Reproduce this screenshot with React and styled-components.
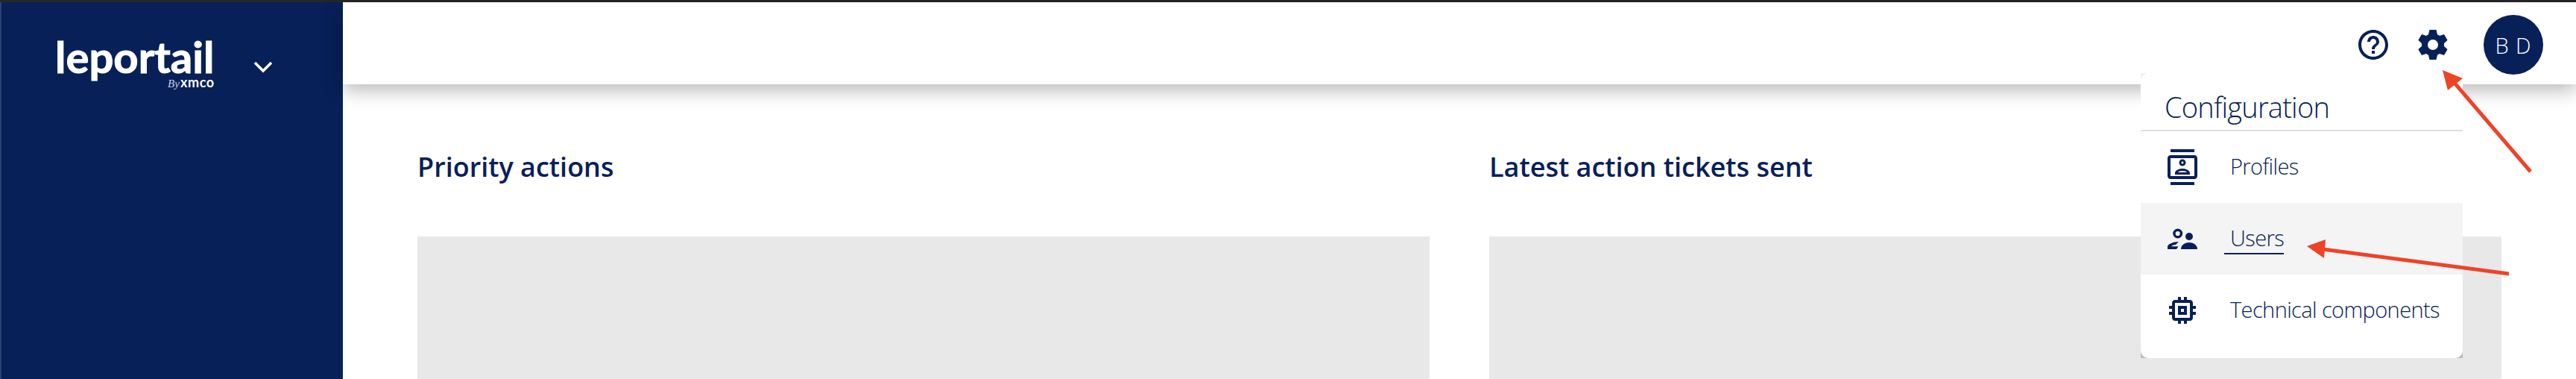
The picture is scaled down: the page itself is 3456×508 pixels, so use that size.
import React from "react";
import styled, { createGlobalStyle } from "styled-components";

const NAVY = "#082058";

const GlobalStyle = createGlobalStyle`
  html, body {
    margin: 0;
    padding: 0;
    background: #fff;
  }
  body {
    font-family: "Open Sans", "Liberation Sans", sans-serif;
    color: ${NAVY};
  }
`;

const Page = styled.div`
  position: relative;
  width: 3456px;
  height: 508px;
  overflow: hidden;
  display: flex;
  flex-direction: column;
  background: #fff;
`;

const TopEdge = styled.div`
  flex: none;
  height: 3px;
  background: #26262a;
`;

const Body = styled.div`
  flex: 1;
  min-height: 0;
  display: flex;
`;

const Sidebar = styled.aside`
  flex: none;
  box-sizing: border-box;
  width: 460px;
  padding: 34px 0 0 70px;
  background: ${NAVY};
  border-left: 2px solid #2d4172;
  display: flex;
  align-items: flex-start;
  gap: 50px;
`;

const Logo = styled.svg`
  flex: none;
  width: 218px;
  height: 90px;
`;

const LogoName = styled.text`
  font-family: "Lato", sans-serif;
  font-weight: 700;
  font-size: 58px;
  fill: #fff;
  stroke: #fff;
  stroke-width: 1px;
`;

const LogoMaker = styled.text`
  font-family: "Lato", sans-serif;
  font-weight: 700;
  font-size: 18px;
  letter-spacing: 0.6px;
  fill: #fff;
`;

const LogoScript = styled.text`
  font-family: "Liberation Serif", serif;
  font-style: italic;
  font-size: 15px;
  fill: #c8d0e0;
`;

const Chevron = styled.svg`
  flex: none;
  width: 26px;
  height: 16px;
  margin-top: 45px;
`;

const Main = styled.main`
  position: relative;
  flex: 1;
  min-width: 0;
  display: flex;
  flex-direction: column;
`;

const Header = styled.header`
  flex: none;
  box-sizing: border-box;
  height: 110px;
  padding: 4px 44px 0 0;
  display: flex;
  align-items: center;
  justify-content: flex-end;
  gap: 32px;
  background: #fff;
  box-shadow: 0 8px 24px rgba(0, 0, 0, 0.28);
`;

const Icon = styled.svg`
  flex: none;
  width: 48px;
  height: 48px;
  fill: ${NAVY};
`;

const Avatar = styled.div`
  width: 80px;
  height: 80px;
  margin-left: 12px;
  border-radius: 50%;
  background: ${NAVY};
  color: #fff;
  display: flex;
  align-items: center;
  justify-content: center;
  font-size: 29px;
  font-weight: 300;
  letter-spacing: 1px;
`;

const Content = styled.div`
  flex: 1;
  min-height: 0;
  padding: 0 100px;
  display: grid;
  grid-template-columns: 1fr 1fr;
  gap: 80px;
`;

const Column = styled.section`
  display: flex;
  flex-direction: column;
  min-height: 0;
`;

const Title = styled.h2`
  margin: 0;
  padding-top: 88px;
  height: 116px;
  font-size: 36px;
  line-height: 46px;
  font-weight: 600;
  color: ${NAVY};
`;

const Placeholder = styled.div`
  flex: 1;
  background: #e8e8e8;
`;

const Dropdown = styled.div`
  position: absolute;
  top: 95px;
  right: 152px;
  width: 432px;
  height: 382px;
  background: linear-gradient(#f0f0f0 50%, #bdbdbd 50%);
`;

const DropdownInner = styled.div`
  height: 100%;
  background: #fff;
  border-radius: 10px;
  overflow: hidden;
`;

const DropdownTitle = styled.div`
  box-sizing: border-box;
  height: 78px;
  padding: 19px 0 0 32px;
  border-bottom: 2px solid #e0e0e0;
  font-size: 38px;
  line-height: 52px;
  font-weight: 300;
  letter-spacing: -0.8px;
`;

const Row = styled.div`
  height: 96px;
  padding-left: 32px;
  display: flex;
  align-items: center;
  background: ${(p) => (p.$active ? "#f4f4f4" : "transparent")};
`;

const RowLabel = styled.span`
  margin-left: ${(p) => (p.$active ? "32px" : "40px")};
  padding-left: ${(p) => (p.$active ? "8px" : "0")};
  border-bottom: 2px solid ${(p) => (p.$active ? NAVY : "transparent")};
  font-size: 29px;
  line-height: 40px;
  font-weight: 300;
  letter-spacing: -0.6px;
  white-space: nowrap;
`;

const Arrows = styled.svg`
  position: absolute;
  top: 0;
  left: 0;
  width: 3456px;
  height: 508px;
  pointer-events: none;
`;

// six blunt teeth around the centre, first one pointing up
const gearPoints = () => {
  const base = [
    [-5.5, -13.6],
    [-4.2, -19.6],
    [4.2, -19.6],
    [5.5, -13.6],
  ];
  const points = [];
  for (let i = 0; i < 6; i++) {
    const a = (i * Math.PI) / 3;
    base.forEach(([x, y]) => {
      const px = 24 + x * Math.cos(a) - y * Math.sin(a);
      const py = 24 + x * Math.sin(a) + y * Math.cos(a);
      points.push(`${px.toFixed(2)} ${py.toFixed(2)}`);
    });
  }
  return `M${points.join("L")}Z`;
};

const HelpIcon = () => (
  <Icon viewBox="0 0 24 24">
    <path d="M11 18h2v-2h-2v2zm1-16C6.48 2 2 6.48 2 12s4.48 10 10 10 10-4.48 10-10S17.52 2 12 2zm0 18c-4.41 0-8-3.59-8-8s3.59-8 8-8 8 3.59 8 8-3.59 8-8 8zm0-14c-2.21 0-4 1.79-4 4h2c0-1.1.9-2 2-2s2 .9 2 2c0 2-3 1.75-3 5h2c0-2.25 3-2.5 3-5 0-2.21-1.79-4-4-4z" />
  </Icon>
);

const GearIcon = () => (
  <Icon viewBox="0 0 48 48">
    <path
      d={gearPoints()}
      stroke={NAVY}
      strokeWidth="1"
      strokeLinejoin="round"
    />
    <circle cx="24" cy="24" r="7" fill="#fff" />
  </Icon>
);

const ProfilesIcon = () => (
  <Icon viewBox="0 0 24 24">
    <path d="M20 0H4v2h16V0zM4 24h16v-2H4v2zM20 4H4c-1.1 0-2 .9-2 2v12c0 1.1.9 2 2 2h16c1.1 0 2-.9 2-2V6c0-1.1-.9-2-2-2zm0 14H4V6h16v12zm-8-6.75c1.24 0 2.25-1.01 2.25-2.25S13.24 6.75 12 6.75 9.75 7.76 9.75 9s1.01 2.25 2.25 2.25zm0-3c.41 0 .75.34.75.75s-.34.75-.75.75-.75-.34-.75-.75.34-.75.75-.75zM17 15.99c0-2.09-3.31-2.99-5-2.99s-5 .9-5 2.99V17h10v-1.01zm-8.19-.49c.61-.52 2.03-1 3.19-1 1.17 0 2.59.48 3.2 1H8.81z" />
  </Icon>
);

const UsersIcon = () => (
  <Icon viewBox="-4 -10 48 48">
    <path
      fillRule="evenodd"
      d="M13.7.5a6.5 6.5 0 1 0 0 13 6.5 6.5 0 0 0 0-13zm0 3.4a3.1 3.1 0 1 1 0 6.2 3.1 3.1 0 0 1 0-6.2z"
    />
    <circle cx="29" cy="11" r="5" />
    <path d="M18 28c0-6 6-9 11-9s11 3 11 9z" />
    <path d="M0 28v-4c1-3 8-6 15-6l-4 4c-3 .2-5 1-6 2.200h9.500L12 28z" />
  </Icon>
);

const ChipIcon = () => (
  <Icon viewBox="0 0 24 24">
    <path d="M15 9H9v6h6V9zm-2 4h-2v-2h2v2zm8-2V9h-2V7c0-1.100-.9-2-2-2h-2V3h-2v2h-2V3H9v2H7c-1.100 0-2 .9-2 2v2H3v2h2v2H3v2h2v2c0 1.100.9 2 2 2h2v2h2v-2h2v2h2v-2h2c1.100 0 2-.9 2-2v-2h2v-2h-2v-2h2zm-4 6H7V7h10v10z" />
  </Icon>
);

const App = () => {
  return (
    <Page>
      <GlobalStyle />
      <TopEdge />
      <Body>
        <Sidebar>
          <Logo viewBox="0 0 218 90">
            <LogoName x="2" y="61">leportail</LogoName>
            <LogoScript x="153" y="80">By</LogoScript>
            <LogoMaker x="170" y="80">xmco</LogoMaker>
          </Logo>
          <Chevron viewBox="0 0 26 16">
            <polyline
              points="2,2 13,13 24,2"
              fill="none"
              stroke="#fff"
              strokeWidth="3.500"
            />
          </Chevron>
        </Sidebar>
        <Main>
          <Header>
            <HelpIcon />
            <GearIcon />
            <Avatar>B D</Avatar>
          </Header>
          <Content>
            <Column>
              <Title>Priority actions</Title>
              <Placeholder />
            </Column>
            <Column>
              <Title>Latest action tickets sent</Title>
              <Placeholder />
            </Column>
          </Content>
          <Dropdown>
            <DropdownInner>
              <DropdownTitle>Configuration</DropdownTitle>
              <Row>
                <ProfilesIcon />
                <RowLabel>Profiles</RowLabel>
              </Row>
              <Row $active>
                <UsersIcon />
                <RowLabel $active>Users</RowLabel>
              </Row>
              <Row>
                <ChipIcon />
                <RowLabel>Technical components</RowLabel>
              </Row>
            </DropdownInner>
          </Dropdown>
        </Main>
      </Body>
      <Arrows viewBox="0 0 3456 508">
        <line x1="3395" y1="230" x2="3292" y2="110" stroke="#ee4327" strokeWidth="5" />
        <polygon points="3277,94 3304,105 3284,121" fill="#ee4327" />
        <line x1="3366" y1="367" x2="3116" y2="334" stroke="#ee4327" strokeWidth="5" />
        <polygon points="3095,330 3120,321 3118,346" fill="#ee4327" />
      </Arrows>
    </Page>
  );
};

export default App;
